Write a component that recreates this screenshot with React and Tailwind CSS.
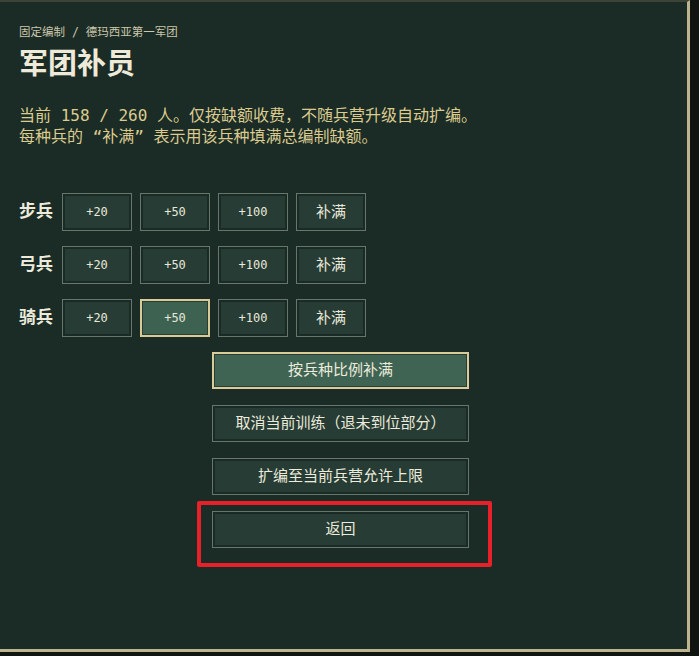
import React from "react";

const FONT = {
  fontFamily: '"DejaVu Sans Mono", "Noto Sans CJK SC", monospace',
};

const rows = [
  { label: "步兵", active: null },
  { label: "弓兵", active: null },
  { label: "骑兵", active: 1 },
];

const amounts = ["+20", "+50", "+100", "补满"];

const SmallButton = ({ text, active }) => (
  <button
    className={`w-[70px] h-[38px] flex items-center justify-center text-[#e9e8da] ${
      text === "补满" ? "text-[15px]" : "text-[12px]"
    } ${
      active
        ? "border-2 border-[#d9cb98] bg-[#3e6251] shadow-[inset_0_0_0_1px_#2a3d33]"
        : "border border-[#66766c] bg-[#263c34] shadow-[inset_0_0_0_2px_#1a2a25]"
    }`}
  >
    {text}
  </button>
);

const WideButton = ({ text, active }) => (
  <button
    className={`w-[257px] h-[37px] flex items-center justify-center text-[15px] text-[#ecebdc] ${
      active
        ? "border-2 border-[#dacb9a] bg-[#3f6453] shadow-[inset_0_0_0_1px_#2a3d33]"
        : "border border-[#66766c] bg-[#263c34] shadow-[inset_0_0_0_2px_#1a2a25]"
    }`}
  >
    {text}
  </button>
);

export default function App() {
  return (
    <div className="w-[699px] h-[656px] bg-[#101512] relative overflow-hidden" style={FONT}>
      <div className="w-[690px] h-[652px] bg-[#1b2b26] border-t-2 border-t-[#3d4336] border-r-[3px] border-b-[3px] border-r-[#bdb58f] border-b-[#bdb58f] pl-[19px]">
        {/* Header */}
        <div className="pt-[23px] text-[11.5px] leading-[14px] text-[#cbc7ab]">
          固定编制 / 德玛西亚第一军团
        </div>
        <h1 className="mt-[8px] text-[29px] leading-[35px] font-bold text-[#eeeada]">
          军团补员
        </h1>

        <div className="mt-[23px] text-[16px] leading-[21px] text-[#dccb8f]">
          <p>当前 158 / 260 人。仅按缺额收费，不随兵营升级自动扩编。</p>
          <p>每种兵的 “补满” 表示用该兵种填满总编制缺额。</p>
        </div>

        {/* Troop rows */}
        <div className="mt-[46px] flex flex-col gap-[15px]">
          {rows.map((row) => (
            <div key={row.label} className="flex items-center">
              <span className="w-[43px] text-[17px] font-bold text-[#ecebdc]">
                {row.label}
              </span>
              <div className="flex gap-[8px]">
                {amounts.map((a, i) => (
                  <SmallButton key={a} text={a} active={row.active === i} />
                ))}
              </div>
            </div>
          ))}
        </div>

        {/* Actions */}
        <div className="mt-[15px] ml-[193px] flex flex-col gap-[16px]">
          <WideButton text="按兵种比例补满" active />
          <WideButton text="取消当前训练（退未到位部分）" />
          <WideButton text="扩编至当前兵营允许上限" />
          <WideButton text="返回" />
        </div>
      </div>

      {/* Annotation box */}
      <div className="absolute left-[197px] top-[501px] w-[295px] h-[66px] border-4 border-[#e8202a] rounded-[2px]" />
    </div>
  );
}
